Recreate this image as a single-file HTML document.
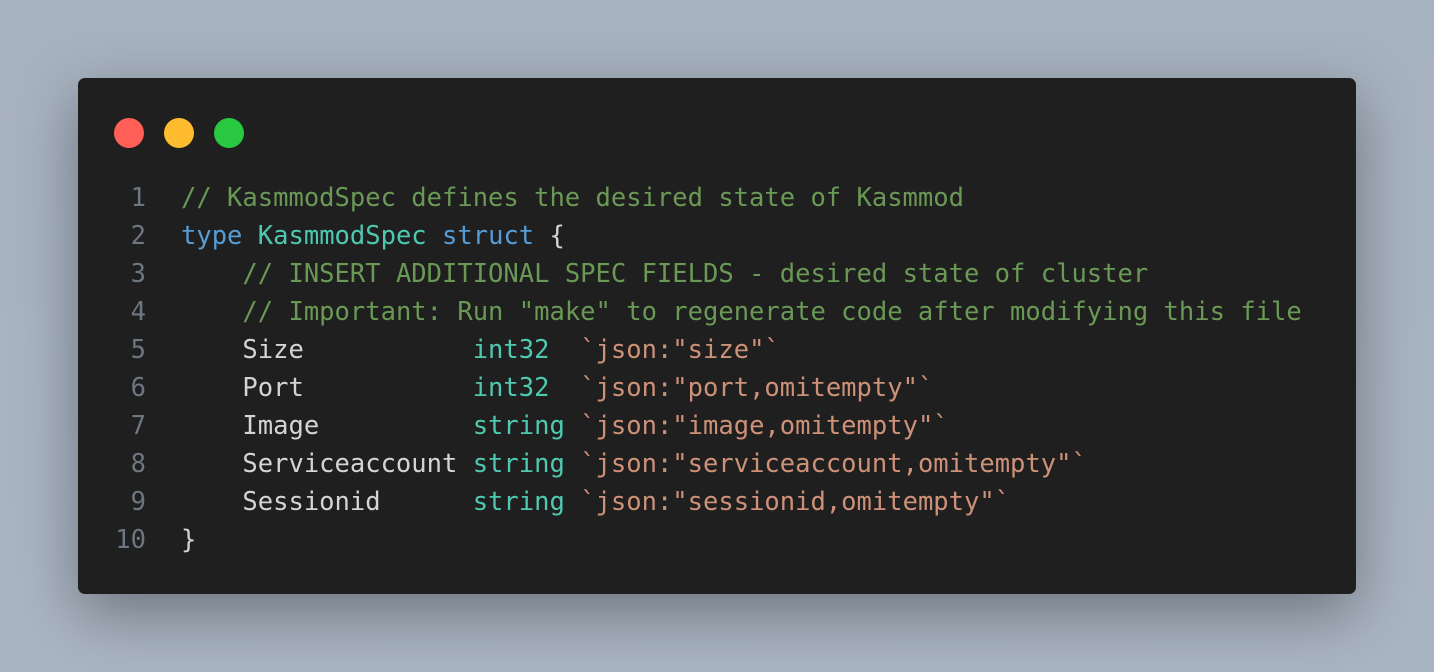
<!DOCTYPE html>
<html><head><style>
html,body{margin:0;padding:0;width:1434px;height:672px;overflow:hidden;background:linear-gradient(180deg,#a7b2bf,#aab5c2);}
.win{position:absolute;left:78px;top:78px;width:1278px;height:516px;background:#1f1f1f;border-radius:7px;box-shadow:0 20px 60px rgba(0,0,0,0.35);}
.dot{position:absolute;top:118px;width:30px;height:30px;border-radius:50%;}
pre{position:absolute;left:0;top:179px;margin:0;font-family:"DejaVu Sans Mono",monospace;font-size:25.5px;line-height:38px;color:#d4d4d4;white-space:pre;}
.ln{display:inline-block;width:146px;text-align:right;color:#6e7681;padding-right:35px;}
.c{color:#6a9955}.k{color:#569cd6}.t{color:#4ec9b0}.s{color:#ce9178}
</style></head><body>
<div class="win"></div>
<div class="dot" style="left:114px;background:#ff5f57"></div>
<div class="dot" style="left:164px;background:#febc2e"></div>
<div class="dot" style="left:214px;background:#28c840"></div>
<pre><span class="ln">1</span><span class="c">// KasmmodSpec defines the desired state of Kasmmod</span>
<span class="ln">2</span><span class="k">type</span> <span class="t">KasmmodSpec</span> <span class="k">struct</span> {
<span class="ln">3</span>    <span class="c">// INSERT ADDITIONAL SPEC FIELDS - desired state of cluster</span>
<span class="ln">4</span>    <span class="c">// Important: Run "make" to regenerate code after modifying this file</span>
<span class="ln">5</span>    Size           <span class="t">int32</span>  <span class="s">`json:"size"`</span>
<span class="ln">6</span>    Port           <span class="t">int32</span>  <span class="s">`json:"port,omitempty"`</span>
<span class="ln">7</span>    Image          <span class="t">string</span> <span class="s">`json:"image,omitempty"`</span>
<span class="ln">8</span>    Serviceaccount <span class="t">string</span> <span class="s">`json:"serviceaccount,omitempty"`</span>
<span class="ln">9</span>    Sessionid      <span class="t">string</span> <span class="s">`json:"sessionid,omitempty"`</span>
<span class="ln">10</span>}</pre>
</body></html>
